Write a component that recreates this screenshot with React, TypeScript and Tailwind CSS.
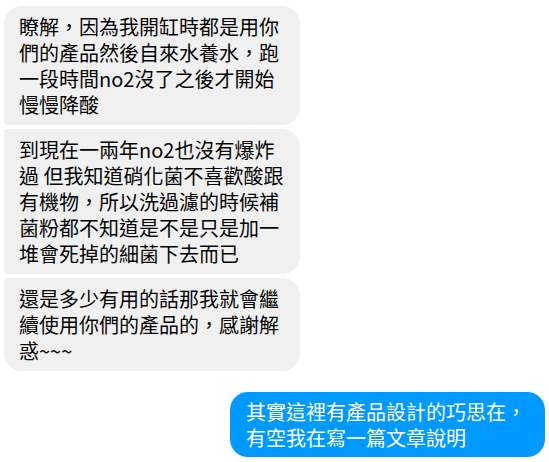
const incoming = [
  {
    text: "瞭解，因為我開缸時都是用你們的產品然後自來水養水，跑一段時間no2沒了之後才開始慢慢降酸",
    corners: "rounded-[18px] rounded-bl-[4px]",
  },
  {
    text: "到現在一兩年no2也沒有爆炸過 但我知道硝化菌不喜歡酸跟有機物，所以洗過濾的時候補菌粉都不知道是不是只是加一堆會死掉的細菌下去而已",
    corners: "rounded-r-[18px] rounded-l-[4px]",
  },
  {
    text: "還是多少有用的話那我就會繼續使用你們的產品的，感謝解惑~~~",
    corners: "rounded-[18px] rounded-tl-[4px]",
  },
];

export default function App() {
  return (
    <div className="w-[549px] h-[462px] bg-white font-['Noto_Sans_CJK_TC','Liberation_Sans',sans-serif] text-[20px] leading-[26px] overflow-hidden">
      <div className="flex flex-col gap-[4px] pt-[6px] pl-[4px]">
        {incoming.map((m, i) => (
          <div
            key={i}
            className={`w-[296px] bg-[#f0f0f0] text-[#050505] px-[15px] pt-[8px] pb-[7px] ${m.corners}`}
          >
            {m.text}
          </div>
        ))}
      </div>
      <div className="flex justify-end pr-[4px] mt-[21px]">
        <div className="bg-[#0099ff] text-white rounded-[18px] pl-[16px] pr-[19px] pt-[7px] pb-[6px]">
          其實這裡有產品設計的巧思在，
          <br />
          有空我在寫一篇文章說明
        </div>
      </div>
    </div>
  );
}
